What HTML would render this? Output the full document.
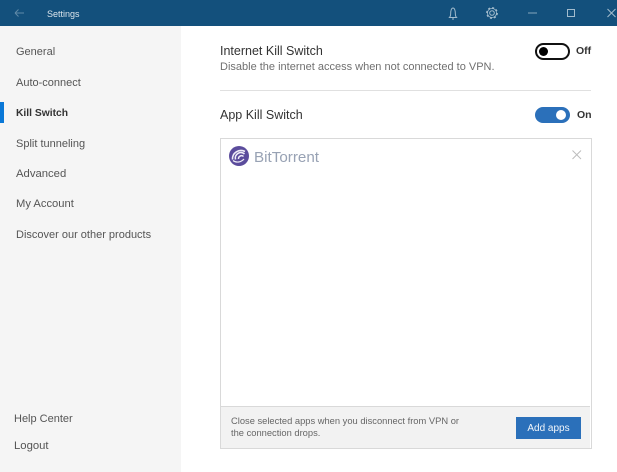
<!DOCTYPE html>
<html>
<head>
<meta charset="utf-8">
<style>
html,body{margin:0;padding:0;width:617px;height:472px;overflow:hidden;background:#fff;font-family:"Liberation Sans",sans-serif}
#w{position:absolute;left:0;top:0;width:617px;height:472px;overflow:hidden;background:#fff;filter:blur(.3px)}
.t{position:absolute;white-space:nowrap;line-height:16px}
.nav{font-size:11px;color:#555;left:16px}
.abs{position:absolute}
</style>
</head>
<body>
<div id="w">
<div class="abs" style="left:0;top:0;width:617px;height:26px;background:#13507c"></div>
<div class="abs" style="left:0;top:26px;width:181px;height:446px;background:#f5f5f5"></div>
<div class="abs" style="left:0;top:102px;width:4px;height:21px;background:#0a78d7"></div>

<svg class="abs" style="left:0;top:0" width="617" height="26" fill="none">
<path d="M15 13H24M15 13l3.500-3.500M15 13l3.500 3.500" stroke="#5f8aa8" stroke-width="1"/>
<path d="M449.500 17.500c1.500-1.500 1-3 1.300-6 .3-2 1.200-3.500 2.200-3.500s1.900 1.500 2.200 3.500c.3 3-.2 4.500 1.300 6zM452 19h2" stroke="#a3bccd" stroke-width="1"/>
<circle cx="492" cy="13" r="2.300" stroke="#a3bccd" stroke-width="1"/>
<circle cx="492" cy="13" r="5" stroke="#a3bccd" stroke-width="1.800" stroke-dasharray="1.900 2.020"/>
<circle cx="492" cy="13" r="4.600" stroke="#a3bccd" stroke-width="0.800"/>
<path d="M528 13h9" stroke="#86a6bc" stroke-width="1"/>
<rect x="567.500" y="9.500" width="7" height="7" stroke="#a3bccd" stroke-width="1"/>
<path d="M607.500 9l8 8M615.500 9l-8 8" stroke="#a3bccd" stroke-width="1"/>
</svg>
<div class="t" style="left:47px;top:6px;font-size:9px;color:#dbe5ec">Settings</div>

<div class="t nav" style="top:44px">General</div>
<div class="t nav" style="top:75px">Auto-connect</div>
<div class="t nav" style="top:106px;font-weight:bold;color:#333;font-size:10.300px">Kill Switch</div>
<div class="t nav" style="top:136px">Split tunneling</div>
<div class="t nav" style="top:166px;font-size:11.300px">Advanced</div>
<div class="t nav" style="top:196px;font-size:11.200px">My Account</div>
<div class="t nav" style="top:227px">Discover our other products</div>
<div class="t nav" style="top:411px;left:14px">Help Center</div>
<div class="t nav" style="top:438px;left:14px;font-size:11.300px">Logout</div>

<div class="t" style="left:220px;top:43px;font-size:12.500px;color:#333">Internet Kill Switch</div>
<div class="t" style="left:220px;top:59px;font-size:11px;color:#707070">Disable the internet access when not connected to VPN.</div>
<div class="abs" style="left:220px;top:90px;width:371px;height:1px;background:#e0e0e0"></div>
<div class="t" style="left:220px;top:107px;font-size:12.500px;color:#333">App Kill Switch</div>

<div class="abs" style="left:535px;top:43px;width:31px;height:13px;border:2px solid #111;border-radius:9px;background:#fff"></div>
<div class="abs" style="left:539px;top:47px;width:9px;height:9px;border-radius:50%;background:#000"></div>
<div class="t" style="left:576px;top:43px;font-size:10.500px;font-weight:bold;color:#333">Off</div>

<div class="abs" style="left:535px;top:107px;width:35px;height:16px;border-radius:8px;background:#2b70ba"></div>
<div class="abs" style="left:556px;top:110px;width:10px;height:10px;border-radius:50%;background:#fff"></div>
<div class="t" style="left:577px;top:107px;font-size:10.500px;font-weight:bold;color:#333">On</div>

<div class="abs" style="left:220px;top:138px;width:370px;height:309px;border:1px solid #d9d9d9;background:#fff"></div>
<div class="abs" style="left:221px;top:406px;width:369px;height:42px;background:#f2f2f2;border-top:1px solid #d9d9d9;box-sizing:border-box"></div>

<svg class="abs" style="left:229px;top:146px" width="20" height="20" fill="none">
<circle cx="10" cy="10" r="10" fill="#5b4c9c"/>
<path d="M16 5.500A8.500 8.500 0 0 0 3.500 13.500" stroke="#efedf7" stroke-width="1.600"/>
<path d="M15.500 8A5.500 5.500 0 0 0 6.500 13.500" stroke="#efedf7" stroke-width="1.600"/>
<path d="M14.500 10.500A3 3 0 0 0 9.500 13" stroke="#efedf7" stroke-width="1.500"/>
<path d="M4 14.500c3 2.500 8 2 11-1.500" stroke="#efedf7" stroke-width="1.200"/>
</svg>
<div class="t" style="left:254px;top:150px;font-size:15.200px;color:#98a2b4">BitTorrent</div>
<svg class="abs" style="left:572px;top:150px" width="10" height="10" fill="none">
<path d="M.5.500l8.500 8.500M9 .5L.5 9" stroke="#bdbdbd" stroke-width="1"/>
</svg>

<div class="t" style="left:231px;top:416px;font-size:9.350px;line-height:11.500px;color:#666">Close selected apps when you disconnect from VPN or<br>the connection drops.</div>
<div class="abs" style="left:516px;top:417px;width:65px;height:22px;background:#2b70ba;color:#f2f6fb;font-size:10px;line-height:23px;text-align:center">Add apps</div>
</div>
</body>
</html>
